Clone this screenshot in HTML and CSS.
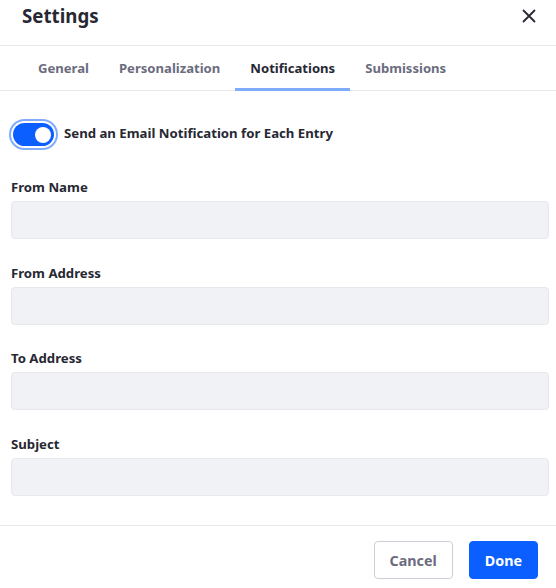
FILE: index.html
```html
<!DOCTYPE html>
<html>
<head>
<meta charset="utf-8">
<link rel="stylesheet" href="styles.css">
</head>
<body>
<div class="modal">
  <header class="modal-header">
    <h1 class="title">Settings</h1>
    <button class="close" aria-label="Close">
      <svg width="14" height="14" viewBox="0 0 14 14"><path d="M1.5 1.5 L12.5 12.5 M12.5 1.5 L1.5 12.5" stroke="#272833" stroke-width="1.8" stroke-linecap="round" fill="none"/></svg>
    </button>
  </header>
  <nav class="tabs">
    <a class="tab">General</a>
    <a class="tab">Personalization</a>
    <a class="tab active">Notifications</a>
    <a class="tab">Submissions</a>
  </nav>
  <main class="modal-body">
    <div class="toggle-row">
      <span class="toggle"><span class="knob"></span></span>
      <span class="toggle-label">Send an Email Notification for Each Entry</span>
    </div>
    <div class="group">
      <label class="label">From Name</label>
      <div class="input"></div>
    </div>
    <div class="group">
      <label class="label">From Address</label>
      <div class="input"></div>
    </div>
    <div class="group">
      <label class="label">To Address</label>
      <div class="input"></div>
    </div>
    <div class="group">
      <label class="label">Subject</label>
      <div class="input"></div>
    </div>
  </main>
  <footer class="modal-footer">
    <button class="btn btn-secondary">Cancel</button>
    <button class="btn btn-primary">Done</button>
  </footer>
</div>
</body>
</html>
```
FILE: styles.css
```css
html, body {
  margin: 0;
  padding: 0;
  background: #fff;
}
body {
  font-family: "Noto Sans", "Open Sans", sans-serif;
  color: #272833;
  width: 556px;
  height: 588px;
  overflow: hidden;
}
.modal {
  display: flex;
  flex-direction: column;
  height: 588px;
}
.modal-header {
  display: flex;
  align-items: center;
  justify-content: space-between;
  padding: 0 20px 14px 22px;
  border-bottom: 1px solid #e7e7ed;
  box-sizing: border-box;
  height: 46px;
}
.title {
  margin: 0;
  font-size: 18.7px;
  font-weight: 700;
  line-height: 24px;
}
.close {
  border: 0;
  background: none;
  padding: 0;
  width: 14px;
  height: 14px;
  display: flex;
}
.tabs {
  display: flex;
  height: 45px;
  padding-left: 23px;
  border-bottom: 1px solid #e7e7ed;
  box-sizing: border-box;
}
.tab {
  display: flex;
  align-items: center;
  padding: 2px 15px 0;
  font-size: 13.1px;
  font-weight: 700;
  color: #6b6c7e;
  border-bottom: 3px solid transparent;
  margin-bottom: -1px;
}
.tab.active {
  color: #272833;
  border-bottom-color: #80acff;
}
.modal-body {
  flex: 1;
  padding: 32px 7px 0 11px;
}
.toggle-row {
  display: flex;
  align-items: center;
  gap: 10px;
  margin-bottom: 31px;
}
.toggle {
  margin-left: 2px;
  width: 41px;
  height: 23px;
  border-radius: 12px;
  background: #0b5fff;
  box-shadow: 0 0 0 2px #fff, 0 0 0 4px #80acff;
  flex: none;
  display: flex;
  align-items: center;
  justify-content: flex-end;
  padding-right: 3px;
  box-sizing: border-box;
}
.knob {
  width: 16px;
  height: 16px;
  border-radius: 50%;
  background: #fff;
}
.toggle-label {
  font-size: 13.2px;
  font-weight: 700;
  line-height: 20px;
  margin-top: -4px;
}
.group {
  display: flex;
  flex-direction: column;
  margin-bottom: 23.5px;
}
.label {
  font-size: 13.2px;
  font-weight: 700;
  line-height: 20px;
  margin-bottom: 4px;
}
.input {
  height: 38px;
  background: #f1f2f5;
  border: 1px solid #e7e7ed;
  border-radius: 4px;
  box-sizing: border-box;
}
.modal-footer {
  border-top: 1px solid #e7e7ed;
  display: flex;
  justify-content: flex-end;
  gap: 16px;
  padding: 15px 18px 9px 0;
}
.btn {
  height: 38px;
  border-radius: 4px;
  font-family: "Noto Sans", "Open Sans", sans-serif;
  font-size: 14.3px;
  font-weight: 700;
  padding: 0 15px;
  box-sizing: border-box;
}
.btn-secondary {
  background: #fff;
  border: 1px solid #cdced9;
  color: #6b6c7e;
}
.btn-primary {
  background: #0b5fff;
  border: 1px solid #0b5fff;
  color: #fff;
}
```
